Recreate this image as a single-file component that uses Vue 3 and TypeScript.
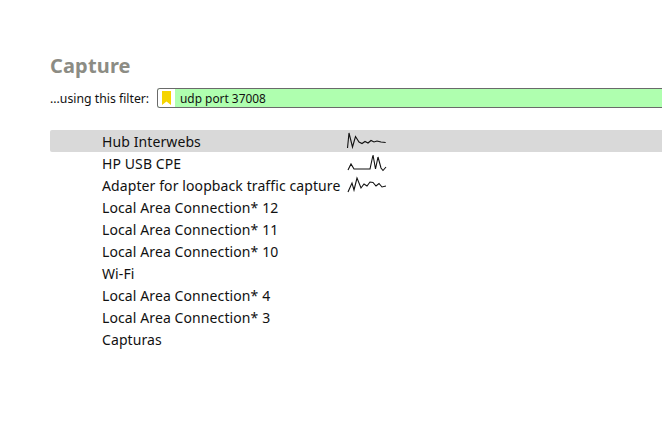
<script setup lang="ts">
const rows = [
  { name: 'Hub Interwebs', spark: 'M347.5 148 L349 133 L352.5 147 L355.5 136.5 L359 142 L362 143.5 L365 141.5 L368 143 L371 140.5 L374 142 L377 141 L381 142 L385.7 142.5' },
  { name: 'HP USB CPE', spark: 'M348 170 L351 164 L354 169 L370 169 L373 155 L375.5 169 L378 157 L381 168 L383 170.5 L386 167' },
  { name: 'Adapter for loopback traffic capture', spark: 'M348 192 L352 183 L354 190 L357 178 L361 188 L364 184 L367 186 L370 182 L373 182.5 L376 186 L379 183.5 L382 187 L386 186' },
  { name: 'Local Area Connection* 12', spark: '' },
  { name: 'Local Area Connection* 11', spark: '' },
  { name: 'Local Area Connection* 10', spark: '' },
  { name: 'Wi-Fi', spark: '' },
  { name: 'Local Area Connection* 4', spark: '' },
  { name: 'Local Area Connection* 3', spark: '' },
  { name: 'Capturas', spark: '' },
]
</script>

<template>
  <main class="page">
    <h1 class="title">Capture</h1>
    <div class="filter-row">
      <span class="filter-label">...using this filter:</span>
      <div class="filter-box">
        <span class="bookmark">
          <svg width="9" height="14" viewBox="0 0 9 14"><path d="M0 0H9V14L4.5 10.5L0 14Z" fill="#f5d400" /></svg>
        </span>
        <span class="filter-text">udp port 37008</span>
      </div>
    </div>
    <ul class="list">
      <li v-for="(r, i) in rows" :key="r.name" class="row" :class="{ selected: i === 0 }">
        <span class="name">{{ r.name }}</span>
        <svg v-if="r.spark" class="spark" width="44" height="22" :viewBox="`346 ${130 + i * 22} 44 22`">
          <path :d="r.spark" fill="none" stroke="#111" stroke-width="1.1" />
        </svg>
      </li>
    </ul>
  </main>
</template>

<style scoped>
.page { width: 662px; height: 425px; padding-top: 52px; box-sizing: border-box; overflow: hidden; font-family: "Noto Sans", sans-serif; color: #111; background: #fff; }
.title { margin: 0 0 0 50px; font-size: 20px; letter-spacing: 0.15px; line-height: 28px; font-weight: 700; color: #8c8c84; }
.filter-row { display: flex; align-items: center; margin: 8px 0 0 50px; height: 20px; }
.filter-label { width: 107px; font-size: 12.25px; flex: none; white-space: nowrap; }
.filter-box { flex: 1; display: flex; align-items: center; height: 20px; box-sizing: border-box; border: 1px solid #6a6a6a; border-right: none; border-radius: 3px 0 0 3px; overflow: hidden; background: #afffaf; }
.bookmark { width: 17px; height: 18px; background: #fff; display: flex; align-items: center; justify-content: center; flex: none; }
.filter-text { padding-left: 5px; font-size: 11.9px; }
.list { list-style: none; margin: 22px 0 0 50px; padding: 0; }
.row { display: flex; height: 22px; align-items: center; padding-left: 52px; position: relative; border-radius: 2px 0 0 2px; }
.row.selected { background: #d9d9d9; }
.name { font-size: 14px; letter-spacing: 0.1px; white-space: nowrap; }
.spark { position: absolute; left: 296px; top: 0; }
</style>
